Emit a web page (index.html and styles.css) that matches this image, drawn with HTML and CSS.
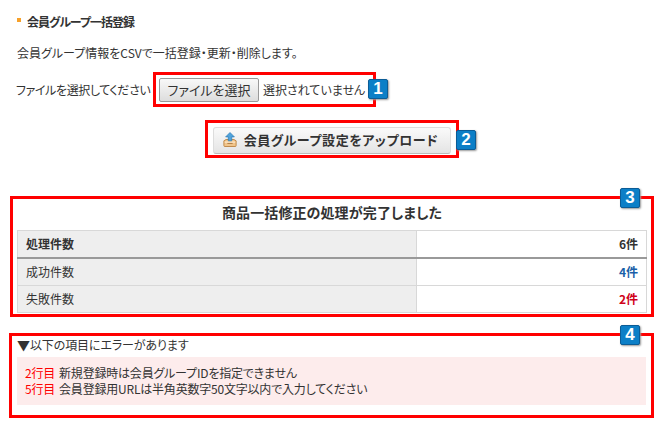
FILE: index.html
```html
<!DOCTYPE html>
<html lang="ja">
<head>
    <meta charset="UTF-8">
    <meta name="viewport" content="width=device-width, initial-scale=1.0">
    <title>会員グループ一括登録</title>
    <link rel="stylesheet" href="styles.css">
</head>
<body>
    <div class="container">
        <h2 class="heading">会員グループ一括登録</h2>
        <p class="desc">会員グループ情報をCSVで一括登録・更新・削除します。</p>

        <div class="file-row">
            <span class="file-label">ファイルを選択してください</span>
            <div class="mark mark-file">
                <button class="file-btn">ファイルを選択</button>
                <span class="file-name">選択されていません</span>
                <span class="badge badge-side">1</span>
            </div>
        </div>

        <div class="upload-row">
            <div class="mark mark-upload">
                <button class="upload-btn">
                    <svg class="upload-icon" width="14" height="17" viewBox="0 0 16 18">
                        <path d="M1 10.5 L3.5 9 H12.5 L15 10.5 V16 Q15 17 14 17 H2 Q1 17 1 16 Z" fill="#f0c48a" stroke="#b9803f" stroke-width="1"/>
                        <path d="M2 12 H14" stroke="#fbe6c8" stroke-width="1.5"/>
                        <path d="M5 13.5 H11" stroke="#a8733a" stroke-width="1"/>
                        <path d="M8 1 L13 6 H10 V10.5 H6 V6 H3 Z" fill="#4fa3dc" stroke="#2a78b4" stroke-width="0.8"/>
                    </svg>
                    <span>会員グループ設定をアップロード</span>
                </button>
                <span class="badge badge-side">2</span>
            </div>
        </div>

        <div class="mark mark-result">
            <span class="badge badge-top">3</span>
            <h3 class="result-title">商品一括修正の処理が完了しました</h3>
            <table class="result">
                <tr class="total">
                    <th>処理件数</th>
                    <td>6件</td>
                </tr>
                <tr>
                    <th>成功件数</th>
                    <td class="ok">4件</td>
                </tr>
                <tr>
                    <th>失敗件数</th>
                    <td class="ng">2件</td>
                </tr>
            </table>
        </div>

        <div class="mark mark-error">
            <span class="badge badge-top">4</span>
            <p class="error-title"><span class="arrow">▼</span>以下の項目にエラーがあります</p>
            <div class="error-box">
                <div><span class="line-no">2行目</span>新規登録時は会員グループIDを指定できません</div>
                <div><span class="line-no">5行目</span>会員登録用URLは半角英数字50文字以内で入力してください</div>
            </div>
        </div>
    </div>
</body>
</html>
```

FILE: styles.css
```css
body {
    margin: 0;
    background-color: #fff;
    color: #333;
    font-family: "Noto Sans CJK JP", "Liberation Sans", sans-serif;
    font-size: 12px;
    font-feature-settings: "palt";
}
.container {
    padding: 14px 11px 0 10px;
    width: 644px;
}
.heading {
    margin: 0 0 0 7px;
    padding-left: 10px;
    font-size: 12px;
    line-height: 16px;
    font-weight: bold;
    letter-spacing: -1px;
    position: relative;
}
.heading::before {
    content: "";
    position: absolute;
    left: 0;
    top: 4px;
    width: 4px;
    height: 4px;
    background-color: #f7a12a;
}
.desc {
    margin: 15px 0 0 7px;
    line-height: 16px;
}
.file-row {
    display: flex;
    align-items: center;
    margin-top: 11px;
    padding-left: 6px;
}
.file-label {
    width: 137px;
    white-space: nowrap;
    letter-spacing: -0.4px;
}
.mark {
    border: 3px solid #f00;
    position: relative;
    box-sizing: border-box;
}
.mark-file {
    display: flex;
    align-items: center;
    width: 223px;
    height: 35px;
    padding-left: 3px;
}
.file-btn {
    width: 100px;
    height: 24px;
    padding: 0;
    border: 1px solid #999;
    border-radius: 2px;
    background: linear-gradient(#f8f8f8, #ddd);
    color: #333;
    font: inherit;
    font-size: 13px;
}
.file-name {
    margin-left: 4px;
}
.badge {
    position: absolute;
    width: 18px;
    height: 18px;
    border: 1px solid #0b5c96;
    border-radius: 2px;
    background-color: #0c7fc7;
    color: #fff;
    font-family: "Liberation Sans", sans-serif;
    font-size: 17px;
    font-weight: bold;
    line-height: 18px;
    text-align: center;
    box-shadow: 1px 1px 2px #999;
}
.badge-side {
    left: 100%;
    top: 4px;
}
.mark-file .badge-side {
    left: 212px;
}
.mark-upload .badge-side {
    left: 248px;
    top: 7px;
}
.badge-top {
    right: 11px;
    top: -11px;
}
.upload-row {
    margin: 13px 0 0 195px;
}
.mark-upload {
    width: 254px;
    height: 38px;
    padding: 4px 5px;
}
.upload-btn {
    display: flex;
    align-items: center;
    justify-content: center;
    gap: 7px;
    width: 100%;
    height: 27px;
    padding: 0 3px 2px 0;
    border: 1px solid #ddd;
    border-bottom-color: #bbb;
    border-radius: 3px;
    background: linear-gradient(#fafafa, #e4e4e4);
    color: #333;
    font: inherit;
    font-size: 13px;
    font-weight: bold;
    letter-spacing: 0.6px;
}
.mark-result {
    margin-top: 38px;
    height: 121px;
    padding: 0 4px;
}
.result-title {
    margin: 0;
    font-size: 14px;
    line-height: 26px;
    padding-bottom: 5px;
    letter-spacing: 0.1px;
    text-align: center;
}
.result {
    width: 630px;
    border-collapse: collapse;
}
.result th, .result td {
    border: 1px solid #d8d8d8;
    height: 24px;
    padding: 0 8px 2px;
}
.result th {
    width: 382px;
    background-color: #eee;
    font-weight: normal;
    text-align: left;
}
.result td {
    text-align: right;
    font-weight: bold;
}
.result .total th {
    font-weight: bold;
}
.result .total th, .result .total td {
    border-bottom: 2px solid #999;
}
.ok {
    color: #1a5fa8;
}
.ng {
    color: #d0021b;
}
.mark-error {
    margin-top: 16px;
    margin-left: -1px;
    width: 645px;
    height: 85px;
    padding: 0 5px;
}
.error-title {
    margin: 0;
    line-height: 18px;
    letter-spacing: -0.1px;
}
.arrow {
    font-size: 13px;
}
.error-box {
    margin-top: 3px;
    padding: 8px;
    background-color: #fdecec;
    line-height: 16px;
    letter-spacing: -0.2px;
}
.line-no {
    color: #f00;
    margin-right: 4px;
}
```
